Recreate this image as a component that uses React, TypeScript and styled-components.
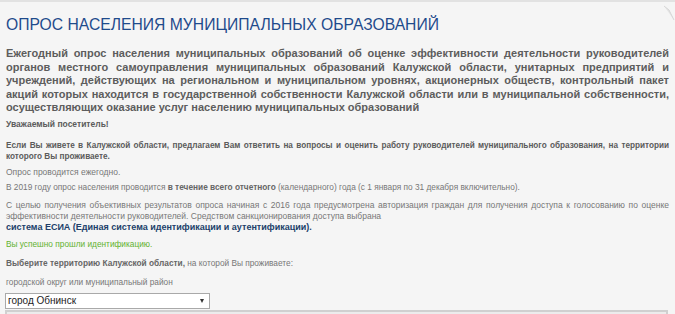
import React from 'react';
import styled, { createGlobalStyle } from 'styled-components';

const GlobalStyle = createGlobalStyle`
    html, body {
        margin: 0;
        padding: 0;
        background: #f5f5f5;
    }
    body {
        font-family: "Liberation Sans", Arial, sans-serif;
        overflow: hidden;
    }
`;

const Page = styled.div`
    position: relative;
    width: 675px;
    height: 314px;
    border-top: 2px solid #e2e2e2;
    box-sizing: border-box;
    padding: 0 6px 0 6px;
    overflow: hidden;
`;

const Curl = styled.svg`
    position: absolute;
    top: 0;
    right: 0;
`;

const Title = styled.h1`
    margin: 14px 0 0 0;
    font-size: 15.7px;
    line-height: 18px;
    font-weight: normal;
    color: #1f4b8c;
    text-transform: uppercase;
`;

const Lead = styled.p`
    margin: 13px 0 0 0;
    font-size: 11px;
    line-height: 13.5px;
    font-weight: bold;
    color: #5d5d5d;
    text-align: justify;
`;

const Text = styled.p<{ $bold?: boolean; $top?: number; $color?: string; $size?: number }>`
    margin: ${p => p.$top ?? 5}px 0 0 0;
    font-size: ${p => p.$size ?? 8.3}px;
    line-height: 11px;
    font-weight: ${p => (p.$bold ? 'bold' : 'normal')};
    color: ${p => p.$color ?? '#777'};
    text-align: justify;
    b {
        color: #666;
    }
`;

const Esia = styled.div`
    font-size: 9px;
    line-height: 11px;
    font-weight: bold;
    color: #213f6a;
`;

const SelectBox = styled.div`
    position: relative;
    margin: 5px 0 0 -1px;
    width: 205px;
    &::after {
        content: '';
        position: absolute;
        top: 6px;
        right: 6px;
        border-left: 2.5px solid transparent;
        border-right: 2.5px solid transparent;
        border-top: 4px solid #333;
        pointer-events: none;
    }
`;

const Select = styled.select`
    display: block;
    width: 100%;
    height: 16px;
    padding: 0 0 0 2px;
    font-family: "Liberation Sans", Arial, sans-serif;
    font-size: 10px;
    color: #222;
    background: #fff;
    border: 1px solid #a9a9a9;
    border-radius: 0;
    appearance: none;
`;

const Panel = styled.div`
    margin: 1px 0 0 -1px;
    width: 659px;
    height: 40px;
    background: #ececec;
    border: 2px solid #d0d0d0;
    border-bottom: none;
`;

const App: React.FC = () => {
    return <Page>
        <GlobalStyle />
        <Curl width="14" height="22" viewBox="0 0 14 22">
            <path d="M0 0 L14 0 L14 22 Z" fill="#f5f5f5" />
            <path d="M3 4 L13 18 L8 8 Z" fill="#e4e4e4" />
            <path d="M3 4 L8 8 L13 18" fill="none" stroke="#cfcfcf" strokeWidth="0.8" />
        </Curl>
        <Title>Опрос населения муниципальных образований</Title>
        <Lead>
            Ежегодный опрос населения муниципальных образований об оценке эффективности деятельности руководителей органов местного самоуправления муниципальных образований Калужской области, унитарных предприятий и учреждений, действующих на региональном и муниципальном уровнях, акционерных обществ, контрольный пакет акций которых находится в государственной собственности Калужской области или в муниципальной собственности, осуществляющих оказание услуг населению муниципальных образований
        </Lead>
        <Text $bold $top={4} $size={8.5} $color="#5b5b5b">Уважаемый посетитель!</Text>
        <Text $bold $top={10} $size={8.2} $color="#5b5b5b">
            Если Вы живете в Калужской области, предлагаем Вам ответить на вопросы и оценить работу руководителей муниципального образования, на территории которого Вы проживаете.
        </Text>
        <Text $top={5} $size={8.5}>Опрос проводится ежегодно.</Text>
        <Text $top={4}>В 2019 году опрос населения проводится <b>в течение всего отчетного</b> (календарного) года (с 1 января по 31 декабря включительно).</Text>
        <Text $top={7} $size={8.5}>
            С целью получения объективных результатов опроса начиная с 2016 года предусмотрена авторизация граждан для получения доступа к голосованию по оценке эффективности деятельности руководителей. Средством санкционирования доступа выбрана
            <Esia>система ЕСИА (Единая система идентификации и аутентификации).</Esia>
        </Text>
        <Text $top={6} $color="#63b22f">Вы успешно прошли идентификацию.</Text>
        <Text $top={8}><b>Выберите территорию Калужской области,</b> на которой Вы проживаете:</Text>
        <Text $top={8}>городской округ или муниципальный район</Text>
        <SelectBox>
            <Select defaultValue="obninsk">
                <option value="obninsk">город Обнинск</option>
            </Select>
        </SelectBox>
        <Panel />
    </Page>
}

export default App;
